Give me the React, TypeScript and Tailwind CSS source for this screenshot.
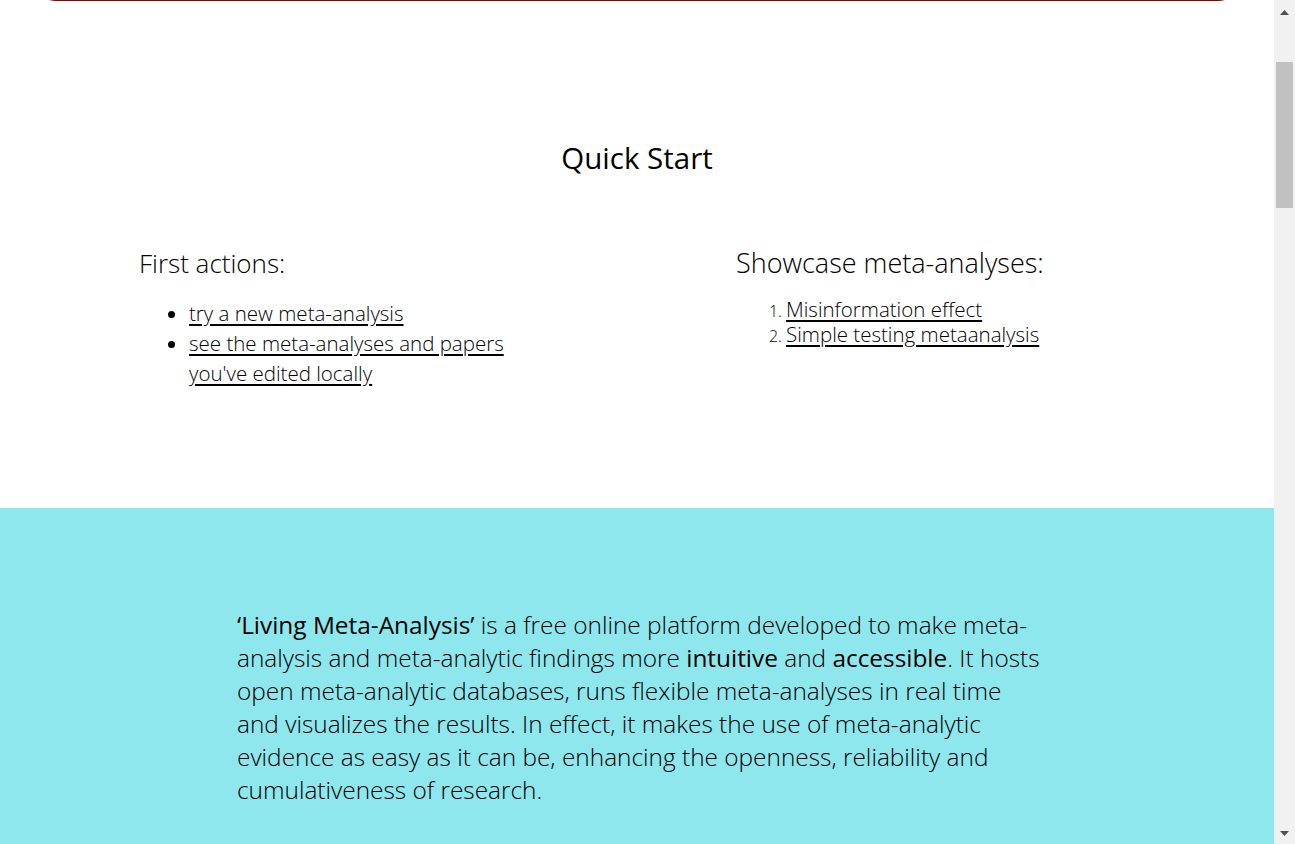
import React from "react";

const font = { fontFamily: '"Open Sans", "Lato", sans-serif' };

const Header = () => (
  <header className="mx-[32px] h-[261px] rounded-b-[24px] border-2 border-t-0 border-[#8b0000] bg-white" />
);

const linkCls = "underline decoration-[1.5px] underline-offset-[3px]";

const QuickStart = () => (
  <section className="bg-white pb-[120px] pt-[139px] text-black">
    <h2 className="text-center text-[29.5px] font-normal leading-[36px]">Quick Start</h2>
    <div className="mx-auto mt-[71px] flex w-[996px]">
      <div className="w-[597px]">
        <h3 className="text-[26px] font-light leading-[32px]">First actions:</h3>
        <ul className="mt-[19px] w-[390px] list-disc pl-[50px] text-[20.5px] font-light leading-[30px]">
          <li>
            <a href="#" className={linkCls}>try a new meta-analysis</a>
          </li>
          <li>
            <a href="#" className={linkCls}>see the meta-analyses and papers you've edited locally</a>
          </li>
        </ul>
      </div>
      <div className="flex-1">
        <h3 className="text-[27px] font-light leading-[32px]">Showcase meta-analyses:</h3>
        <ol className="mt-[18px] list-decimal pl-[50px] text-[20.5px] font-light leading-[25px] marker:text-[16px]">
          <li>
            <a href="#" className={linkCls}>Misinformation effect</a>
          </li>
          <li>
            <a href="#" className={linkCls}>Simple testing metaanalysis</a>
          </li>
        </ol>
      </div>
    </div>
  </section>
);

const About = () => (
  <section className="min-h-[3600px] bg-[#8fe7ee] pt-[100px] text-black">
    <p className="mx-auto w-[800px] whitespace-nowrap text-[24.4px] font-light leading-[33px]">
      <span className="font-normal">‘Living Meta-Analysis’</span> is a free online platform developed to make meta-
      <br />
      analysis and meta-analytic findings more <span className="font-normal">intuitive</span> and{" "}
      <span className="font-normal">accessible</span>. It hosts
      <br />
      open meta-analytic databases, runs flexible meta-analyses in real time
      <br />
      and visualizes the results. In effect, it makes the use of meta-analytic
      <br />
      evidence as easy as it can be, enhancing the openness, reliability and
      <br />
      cumulativeness of research.
    </p>
  </section>
);

const Scrollbar = () => (
  <div className="flex h-full w-[21px] shrink-0 flex-col items-center bg-[#f1f1f1]">
    <svg width="9" height="5" viewBox="0 0 9 5" className="mt-[10px]">
      <path d="M4.5 0 L9 5 L0 5 Z" fill="#505050" />
    </svg>
    <div className="mt-[47px] h-[146px] w-[17px] bg-[#c1c1c1]" />
    <div className="flex-1" />
    <svg width="9" height="5" viewBox="0 0 9 5" className="mb-[8px]">
      <path d="M0 0 L9 0 L4.5 5 Z" fill="#505050" />
    </svg>
  </div>
);

export default function App() {
  const ref = React.useRef<HTMLDivElement>(null);

  React.useEffect(() => {
    if (ref.current) ref.current.scrollTop = 260;
  }, []);

  return (
    <div style={font} className="flex h-screen bg-white">
      <div ref={ref} className="flex-1 overflow-hidden">
        <Header />
        <QuickStart />
        <About />
      </div>
      <Scrollbar />
    </div>
  );
}
